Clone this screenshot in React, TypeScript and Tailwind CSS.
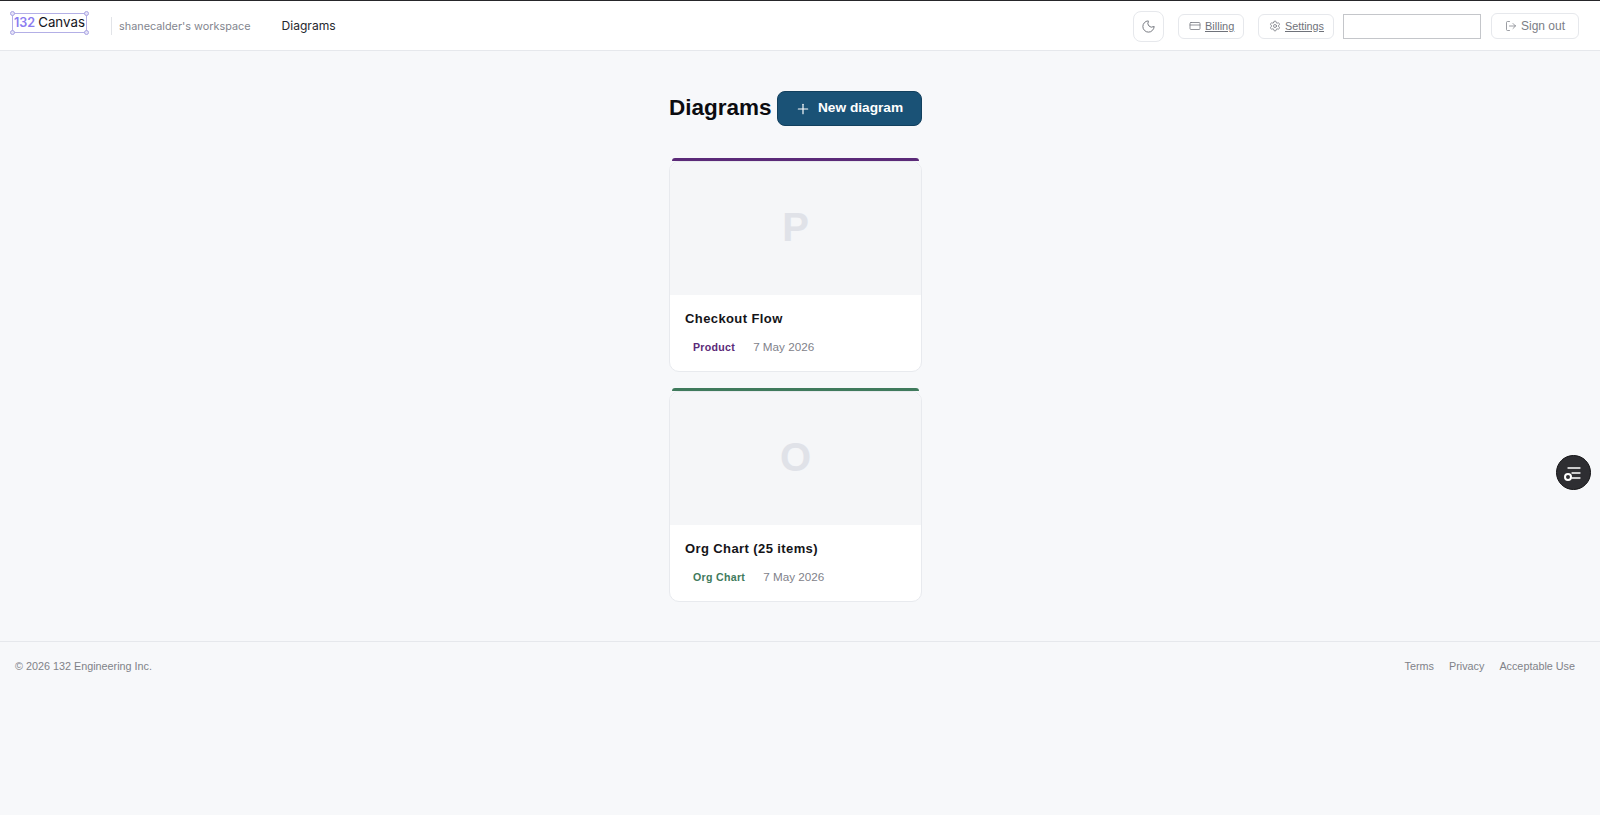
import { CreditCard, LogOut, Moon, Plus, Settings } from "lucide-react";

const sans = "font-['Liberation_Sans',Arial,sans-serif]";

interface Diagram {
  title: string;
  letter: string;
  tag: string;
  date: string;
  barClass: string;
  tagClass: string;
}

const diagrams: Diagram[] = [
  {
    title: "Checkout Flow",
    letter: "P",
    tag: "Product",
    date: "7 May 2026",
    barClass: "bg-[#5b2a78]",
    tagClass: "text-[#5b2a78]",
  },
  {
    title: "Org Chart (25 items)",
    letter: "O",
    tag: "Org Chart",
    date: "7 May 2026",
    barClass: "bg-[#3f7a5c]",
    tagClass: "text-[#3f7a5c]",
  },
];

function Logo() {
  const handle =
    "absolute w-[5px] h-[5px] rounded-full border border-[#a9a4e2] bg-[#e4e2f8]";
  return (
    <div className="relative flex items-center w-[75px] h-[20px] mb-[5px] border border-[#b3afe6] pl-[1px] font-['Inter',sans-serif] leading-none whitespace-nowrap">
      <span className="text-[12.6px] font-semibold text-[#8b7cf0]">132</span>
      <span className="ml-[3px] text-[13.3px] text-[#14141c]">Canvas</span>
      <span className={`${handle} -left-[3px] -top-[3px]`} />
      <span className={`${handle} -right-[3px] -top-[3px]`} />
      <span className={`${handle} -left-[3px] -bottom-[3px]`} />
      <span className={`${handle} -right-[3px] -bottom-[3px]`} />
    </div>
  );
}

function Header() {
  return (
    <header className="flex items-center h-[51px] pl-[12px] pr-[21px] bg-white border-t border-t-[#26262a] border-b border-b-[#e6e8ec]">
      <Logo />
      <div className="ml-[24px] w-px h-[18px] bg-[#e2e4e8]" />
      <span className="ml-[7px] mt-px font-['Inter',sans-serif] text-[10.85px] text-[#82858e] whitespace-nowrap">
        shanecalder's workspace
      </span>
      <span className="ml-[31px] mt-[2px] font-['Inter',sans-serif] text-[12.1px] text-[#26282e]">
        Diagrams
      </span>

      <div className="ml-auto mt-px flex items-center">
        <button
          type="button"
          className="flex items-center justify-center w-[31px] h-[31px] rounded-lg border border-[#e6e8ec] bg-white text-[#6f727a]"
        >
          <Moon className="w-[15px] h-[15px]" strokeWidth={1.5} />
        </button>
        <a
          className={`ml-[14px] flex items-center gap-[4px] w-[66px] h-[25px] pl-[10px] rounded-md border border-[#e6e8ec] bg-white text-[11px] text-[#6f727a] underline ${sans}`}
        >
          <CreditCard className="w-[12px] h-[12px]" strokeWidth={1.5} />
          Billing
        </a>
        <a
          className={`ml-[14px] flex items-center gap-[4px] w-[76px] h-[25px] pl-[10px] rounded-md border border-[#e6e8ec] bg-white text-[10.8px] text-[#6f727a] underline ${sans}`}
        >
          <Settings className="w-[12px] h-[12px]" strokeWidth={1.5} />
          Settings
        </a>
        <input className="ml-[9px] w-[138px] h-[25px] border border-[#c4c6ca] bg-white" />
        <button
          type="button"
          className={`ml-[10px] flex items-center gap-[4px] w-[88px] h-[26px] pl-[13px] rounded-md border border-[#e6e8ec] bg-white text-[12px] text-[#7b7e86] ${sans}`}
        >
          <LogOut className="w-[12px] h-[12px]" strokeWidth={1.5} />
          Sign out
        </button>
      </div>
    </header>
  );
}

function DiagramCard({ diagram }: { diagram: Diagram }) {
  return (
    <div className="flex flex-col h-[214px]">
      <div className={`h-[3px] mx-[3px] rounded-t-[3px] ${diagram.barClass}`} />
      <div className="flex-1 rounded-[10px] overflow-hidden border border-[#e8eaee] bg-white">
        <div className="flex items-center justify-center h-[133px] pb-[3px] bg-[#f5f6f8]">
          <span className="text-[40px] font-bold text-[#e0e2e8]">
            {diagram.letter}
          </span>
        </div>
        <div className="px-[15px]">
          <h3 className="mt-[15px] text-[13px] leading-[18px] font-bold tracking-[0.4px] text-[#141418]">
            {diagram.title}
          </h3>
          <div className="flex items-center mt-[10px] pl-[8px]">
            <span
              className={`text-[10.6px] leading-[18px] font-bold tracking-[0.3px] ${diagram.tagClass}`}
            >
              {diagram.tag}
            </span>
            <span className="ml-[18px] text-[11.7px] leading-[18px] text-[#7f828a]">
              {diagram.date}
            </span>
          </div>
        </div>
      </div>
    </div>
  );
}

function FloatingButton() {
  return (
    <button
      type="button"
      className="fixed left-[1556px] top-[455px] flex items-center justify-center w-[35px] h-[35px] rounded-full border border-[#141416] bg-[#2e2e32]"
    >
      <svg width="20" height="17" viewBox="0 0 20 17" fill="none">
        <path
          d="M4 4h12M8 9h8M8 14h8"
          stroke="#ffffff"
          strokeWidth="1.3"
          strokeLinecap="round"
        />
        <circle cx="4" cy="13" r="3" stroke="#ffffff" strokeWidth="2" />
      </svg>
    </button>
  );
}

export default function App() {
  return (
    <div className={`min-h-[815px] bg-[#f7f8fa] ${sans}`}>
      <Header />
      <main className="flex justify-center pt-[40px] pb-[39px] pr-[9px]">
        <div className="flex flex-col w-[253px]">
          <div className="flex items-center gap-[5px] h-[35px]">
            <h1 className="pb-[2px] text-[22.5px] font-bold text-[#0c0c10] whitespace-nowrap">
              Diagrams
            </h1>
            <button
              type="button"
              className="flex items-center justify-center gap-[7px] w-[145px] h-[35px] rounded-lg border border-[#12405e] bg-[#1a5276] text-[13.7px] font-bold text-white whitespace-nowrap"
            >
              <Plus className="w-[16px] h-[16px]" strokeWidth={1.75} />
              New diagram
            </button>
          </div>
          <div className="flex flex-col gap-[16px] mt-[32px]">
            {diagrams.map((d) => (
              <DiagramCard key={d.title} diagram={d} />
            ))}
          </div>
        </div>
      </main>
      <footer className="flex items-center justify-between h-[50px] pl-[15px] pr-[25px] border-t border-t-[#e6e8ec] text-[10.8px] text-[#808288]">
        <span>© 2026 132 Engineering Inc.</span>
        <div className="flex items-center gap-[15px]">
          <a>Terms</a>
          <a>Privacy</a>
          <a>Acceptable Use</a>
        </div>
      </footer>
      <FloatingButton />
    </div>
  );
}
